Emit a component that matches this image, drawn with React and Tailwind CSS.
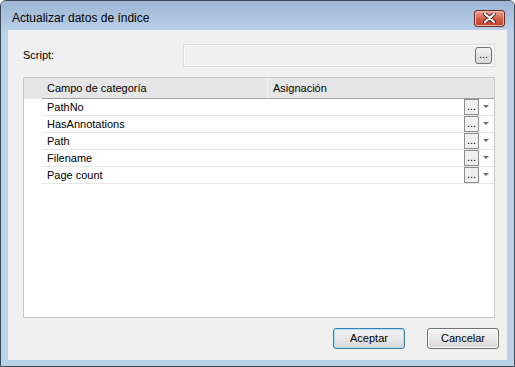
import { useState } from "react";

const rows = ["PathNo", "HasAnnotations", "Path", "Filename", "Page count"];

function DotsButton({ className = "" }) {
  return (
    <button
      className={`flex items-end justify-center border border-[#8d8d8d] bg-[#efefef] text-[11px] leading-none text-black pb-[2px] ${className}`}
    >
      ...
    </button>
  );
}

function DialogButton({ children, isDefault }) {
  return (
    <button
      className={`w-[72px] h-[21px] rounded-[3px] border text-[11px] text-black bg-gradient-to-b from-[#f3f3f3] via-[#e8e8e8] to-[#d6d6d6] ${
        isDefault
          ? "border-[#3c7fb1] shadow-[inset_0_0_0_1px_#a9e2f6]"
          : "border-[#707070] shadow-[inset_0_0_0_1px_#fafafa]"
      }`}
    >
      {children}
    </button>
  );
}

export default function App() {
  let [selected, setSelected] = useState(null);

  return (
    <div
      className="w-[515px] h-[367px] flex flex-col border border-[#3b4a5a] rounded-t-[6px] bg-[#bad1ea] overflow-hidden"
      style={{ fontFamily: '"Liberation Sans", Arial, sans-serif' }}
    >
      {/* title bar */}
      <div className="h-[29px] shrink-0 flex items-center justify-between pt-[5px] pl-[11px] pr-[9px] bg-gradient-to-b from-[#9cb6d3] to-[#b8cfe8]">
        <span className="text-[12px] text-black">Actualizar datos de índice</span>
        <button className="w-[31px] h-[17px] flex items-center justify-center rounded-[3px] border border-[#6b2a22] bg-gradient-to-b from-[#e9a99a] via-[#d2604a] to-[#c23d26] shadow-[inset_0_0_0_1px_#f0b8aa]">
          <svg width="13" height="10" viewBox="0 0 13 10">
            <path
              d="M2 1 L11 9 M11 1 L2 9"
              stroke="#4a2a26"
              strokeWidth="4"
              strokeLinecap="round"
            />
            <path
              d="M2 1 L11 9 M11 1 L2 9"
              stroke="#ffffff"
              strokeWidth="2.2"
              strokeLinecap="round"
            />
          </svg>
        </button>
      </div>

      {/* client */}
      <div className="flex-1 px-[7px] pb-[7px] flex">
        <div className="flex-1 bg-[#f0f0f0] flex flex-col pt-[14px] pl-[15px] pr-[12px] pb-[11px] text-[11px] text-black">
          <div className="flex items-center h-[23px]">
            <span className="w-[160px]">Script:</span>
            <div className="flex-1 h-full flex items-center justify-end pr-[2px] border border-[#dcdcdc] bg-[#f0f0f0] shadow-[inset_0_0_0_1px_#fbfbfb]">
              <button className="w-[17px] h-[17px] flex items-end justify-center pb-[3px] rounded-[3px] border border-[#707070] bg-gradient-to-b from-[#f2f2f2] to-[#d8d8d8] text-[10px] leading-none">
                ...
              </button>
            </div>
          </div>

          {/* grid */}
          <div className="mt-[10px] h-[241px] border border-[#c8c8c8] bg-white flex flex-col">
            <div className="h-[21px] flex bg-[#e6e6e6]">
              <div className="w-[18px]" />
              <div className="w-[226px] flex items-center pl-[5px] border-b border-[#a0a0a0] border-r border-r-[#f4f4f4]">
                Campo de categoría
              </div>
              <div className="flex-1 flex items-center pl-[5px] border-b border-[#a0a0a0]">
                Asignación
              </div>
            </div>
            {rows.map((name, i) => (
              <div
                key={name}
                className="h-[17px] flex"
                onClick={() => setSelected(i)}
              >
                <div className="w-[18px]" />
                <div
                  className={`flex-1 flex border-b border-[#e6e6e6] ${
                    selected === i ? "bg-[#eef5fc]" : ""
                  }`}
                >
                  <div className="w-[226px] flex items-center pl-[5px]">{name}</div>
                  <div className="flex-1 flex items-center justify-end pr-[1px]">
                    <DotsButton className="w-[15px] h-[16px]" />
                    <div className="w-[14px] flex justify-center">
                      <svg width="6" height="4" viewBox="0 0 6 4">
                        <path d="M0 0 H6 L3 3 Z" fill="#6a6a6a" />
                      </svg>
                    </div>
                  </div>
                </div>
              </div>
            ))}
          </div>

          <div className="mt-[10px] flex justify-end gap-[22px] -mr-[4px]">
            <DialogButton isDefault>Aceptar</DialogButton>
            <DialogButton>Cancelar</DialogButton>
          </div>
        </div>
      </div>
    </div>
  );
}
